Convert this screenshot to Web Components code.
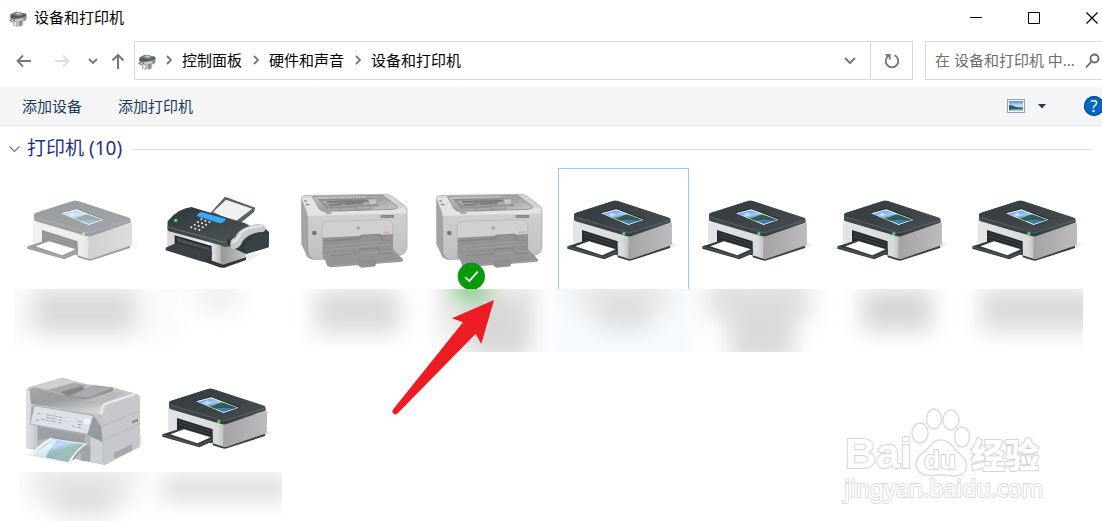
<!DOCTYPE html>
<html lang="zh-CN">
<head>
<meta charset="utf-8">
<title>设备和打印机</title>
<style>
html, body { margin: 0; min-height: 100%; background: #fff; }
body { font: 15px/20px "Noto Sans", "Noto Sans CJK SC", sans-serif; color: #000; overflow-x: hidden; }
</style>
</head>
<body>
<devices-window></devices-window>
<script>
function define(name, html, init) {
  customElements.define(name, class extends HTMLElement {
    constructor() {
      super();
      this.attachShadow({ mode: 'open' }).innerHTML = html;
    }
    connectedCallback() { if (init) init.call(this, this.shadowRoot); }
  });
}
const reset = `
  button { font: inherit; color: inherit; background: none; border: 0; padding: 0; margin: 0; }
  svg { display: block; }`;

define('mini-printer', `<style>:host{display:block;width:18px;height:18px}svg{display:block}</style>
<svg width="18" height="18" viewBox="0 0 54 54">
  <path d="M4 14 22 5 52 12 52 27 30 34 4 25Z" fill="#4d5457"/>
  <path d="M4 13 22 5 52 11 32 20Z" fill="#737b7e"/>
  <path d="M18 11 25 7 38 10 31 15Z" fill="#a9cbd3"/>
  <path d="M10 20 32 25 32 38 10 31Z" fill="#666"/>
  <path d="M34 24 52 17 51 31 35 38Z" fill="#8e9092"/>
  <path d="M2 31 12 26 21 29 10 35Z" fill="#ddd" stroke="#666" stroke-width="3"/>
  <path d="M19 27 40 24 43 44 25 50 15 42Z" fill="#c8c8c8"/>
  <path d="M28 32 42 29 41 47 28 50Z" fill="#8e8e8e" stroke="#ddd" stroke-width="2"/>
  <path d="M14 36 24 34 23 49 14 46Z" fill="#eee" stroke="#888" stroke-width="2"/>
</svg>`);

define('title-bar', `<style>${reset}
  :host { display: flex; height: 36px; align-items: center; overflow: hidden; }
  mini-printer { margin: 1px 7px 0 9px; }
  h1 { flex: 1; margin: 0 0 2px; font-size: 15px; font-weight: 400; line-height: 20px; }
  .keys { display: flex; flex: none; margin-right: -19px; }
  .keys button { width: 58px; height: 34px; display: grid; place-items: center; }
</style>
<mini-printer></mini-printer><h1><slot></slot></h1>
<div class="keys">
  <button aria-label="最小化"><svg width="14" height="14"><path d="M1 6.5H13" stroke="#000"/></svg></button>
  <button aria-label="最大化"><svg width="14" height="14"><path d="M1.500 1.500H12.500V12.500H1.500Z" fill="none" stroke="#000"/></svg></button>
  <button aria-label="关闭"><svg width="14" height="14"><path d="M1.500 1.500 12.500 12.500M12.500 1.500 1.500 12.500" stroke="#000" stroke-width="1.200"/></svg></button>
</div>`);

define('address-bar', `<style>${reset}
  :host { display: flex; height: 39px; padding: 5px 0 7px; overflow: hidden; }
  .go { display: flex; align-items: center; width: 134px; flex: none; }
  .go button { display: grid; place-items: center; height: 39px; }
  .go button:nth-child(1) { width: 47px; } .go button:nth-child(2) { width: 30px; }
  .go button:nth-child(3) { width: 31px; } .go button:nth-child(4) { width: 20px; }
  nav { flex: 1; display: flex; align-items: center; border: 1px solid #d9d9d9; min-width: 0; }
  mini-printer { margin: 2px 6px 0 3px; flex: none; }
  ol { display: flex; flex: 1; list-style: none; margin: 0 0 2px; padding: 0; white-space: nowrap; }
  li { display: flex; align-items: center; }
  li svg { margin: 0 8px 0 9px; }
  li:first-child svg { margin-left: 2px; }
  a { color: #000; text-decoration: none; }
  .drop { width: 40px; height: 37px; display: grid; place-items: center; }
  .again { width: 42px; height: 37px; border-left: 1px solid #d9d9d9; display: grid; place-items: center; }
  label { display: flex; align-items: center; flex: none; width: 177px; margin: 0 -2px 0 12px; border: 1px solid #d9d9d9; }
  input { flex: 1; min-width: 0; border: 0; outline: 0; padding: 0 0 2px 9px; font: inherit; color: #6d6d6d; background: none; }
  input::placeholder { color: #6d6d6d; opacity: 1; }
  label svg { margin-right: 2px; }
</style>
<div class="go">
  <button aria-label="后退"><svg width="16" height="14" fill="none" stroke="#777" stroke-width="1.800"><path d="M15 7H1M7 1.500 1.500 7 7 12.500"/></svg></button>
  <button aria-label="前进"><svg width="16" height="14" fill="none" stroke="#dedede" stroke-width="1.800"><path d="M1 7H15M9 1.500 14.500 7 9 12.500"/></svg></button>
  <button aria-label="最近的位置"><svg width="10" height="8" fill="none" stroke="#777" stroke-width="1.800"><path d="M1 2 5 6 9 2"/></svg></button>
  <button aria-label="上移"><svg width="14" height="16" fill="none" stroke="#777" stroke-width="2"><path d="M7 16V2M1.500 7.500 7 2 12.500 7.500"/></svg></button>
</div>
<nav aria-label="地址">
  <mini-printer></mini-printer>
  <ol></ol>
  <button class="drop" aria-label="以前的位置"><svg width="14" height="10" fill="none" stroke="#777" stroke-width="2"><path d="M2 2 7 7 12 2"/></svg></button>
  <button class="again" aria-label="刷新"><svg width="16" height="16" fill="none" stroke="#777" stroke-width="1.800"><path d="M5.500 2.200A6.300 6.300 0 1 0 10.500 2.200"/><path d="M1.500 1.900H5.700V6.400"/></svg></button>
</nav>
<label><input type="text" placeholder="在 设备和打印机 中..." aria-label="搜索"><svg width="16" height="16" fill="none" stroke="#666" stroke-width="1.800"><circle cx="9.500" cy="5.500" r="4"/><path d="M6.500 8.500 1 14.500"/></svg></label>`,
function (root) {
  root.querySelector('ol').innerHTML = this.getAttribute('path').split('/').map(p =>
    `<li><svg width="10" height="10" fill="none" stroke="#777" stroke-width="1.800"><path d="M3 1 7 5 3 9"/></svg><a href="#">${p}</a></li>`).join('');
});

define('command-bar', `<style>${reset}
  :host { display: flex; align-items: center; height: 38px; background: #f4f5f7; border-bottom: 1px solid #e5e6e8; color: #1e395b; overflow: hidden; padding-left: 22px; }
  .left { display: flex; flex: 1; gap: 36px; }
  .view { margin-right: 13px; } .more { margin-right: 38px; }
  .help { flex: none; width: 20px; height: 20px; border-radius: 50%; background: #0067c4; box-shadow: inset 0 0 0 1px #004a8c; color: #fff; font-size: 16px; line-height: 20px; margin-right: -2px; }
</style>
<div class="left"><slot></slot></div>
<button class="view" aria-label="更改视图"><svg width="18" height="14">
  <defs><linearGradient id="s" x2="0" y2="1"><stop stop-color="#4a8de0"/><stop offset=".5" stop-color="#d5e8f6"/><stop offset=".7" stop-color="#5c8fa0"/><stop offset="1" stop-color="#b8d6e8"/></linearGradient></defs>
  <rect x=".5" y=".5" width="17" height="13" fill="#fff" stroke="#999fa5"/><rect x="2" y="2" width="14" height="10" fill="url(#s)"/><path d="M2 6Q6 6 9 8 12 9 16 9V10Q8 10 2 11Z" fill="#2e6057"/></svg></button>
<button class="more" aria-label="更多选项"><svg width="8" height="5"><path d="M0 0H8L4 4.500Z" fill="#1e395b"/></svg></button>
<button class="help" aria-label="帮助">?</button>`);

define('command-button', `<style>${reset} :host { display: block; } button { line-height: 20px; display: block; }</style><button><slot></slot></button>`);

define('device-group', `<style>${reset}
  :host { display: block; }
  header { display: flex; align-items: center; height: 38px; padding: 4px 9px 0; }
  h2 { margin: 0; font-weight: 400; font-size: 19px; line-height: 24px; color: #1e3287; }
  h2 button { display: flex; align-items: center; gap: 7px; }
  h2 span { margin-bottom: 2px; }
  hr { flex: 1; border: 0; height: 1px; background: #e2e2e2; margin: 1px 0 0 9px; }
  .items { display: flex; flex-wrap: wrap; gap: 4px; padding-left: 18px; }
</style>
<header><h2><button aria-expanded="true"><svg width="11" height="8" fill="none" stroke="#777" stroke-width="1.200"><path d="M.500 1.500 5.500 6.500 10.500 1.500"/></svg><span></span></button></h2><hr></header>
<div class="items"><slot></slot></div>`, function (root) {
  root.querySelector('span').textContent = this.getAttribute('heading');
});

const photo = (id, pts) => `
  <clipPath id="${id}c"><path d="${pts}"/></clipPath>
  <linearGradient id="${id}g" x1=".1" y1="0" x2=".6" y2="1"><stop stop-color="#3f86f5"/><stop offset=".4" stop-color="#a5cbf6"/><stop offset=".55" stop-color="#5f9f9c"/><stop offset="1" stop-color="#2f6fb4"/></linearGradient>`;

const art = {
  inkjet: ['24 24 393 363', `
    <defs>
      <linearGradient id="top" x2="1" y2=".6"><stop stop-color="#353c40"/><stop offset=".5" stop-color="#3b4246"/><stop offset="1" stop-color="#454c50"/></linearGradient>
      <linearGradient id="front"><stop stop-color="#e3e4e6"/><stop offset=".85" stop-color="#d9dadc"/><stop offset="1" stop-color="#b4b5b7"/></linearGradient>
      <linearGradient id="side"><stop stop-color="#a3a3a5"/><stop offset="1" stop-color="#bcbcbe"/></linearGradient>
      <linearGradient id="rim"><stop stop-color="#42494d"/><stop offset=".6" stop-color="#363d41"/><stop offset="1" stop-color="#4c5357"/></linearGradient>
      <linearGradient id="shade"><stop stop-color="#bbb"/><stop offset="1" stop-color="#fff"/></linearGradient>
      ${photo('ph', 'M158 161 199 151 276 179 236 192Z')}
    </defs>
    <path d="M358 245 390 252 376 260 350 266Z" fill="url(#shade)" opacity=".5"/>
    <path d="M69 178 245 226 245 292 237 296 69 248Z" fill="url(#front)"/>
    <path d="M236 228 366 188V252L359 260 245 299 234 295Z" fill="url(#side)"/>
    <path d="M96 210 203 244V286L96 258Z" fill="#242a2e"/>
    <path d="M102 220 200 251M102 229 200 260" stroke="#41484c" stroke-width="3"/>
    <path d="M52 259 112 240 204 267 204 280 163 298 52 266Z" fill="#353c40"/>
    <path d="M76 259 117 244 197 268 157 286Z" fill="#fff"/>
    <path d="M54 261 160 292 203 275" fill="none" stroke="#666d70" stroke-width="2"/>
    <path d="M203 286 236 296Q240 298 246 296L360 257V264L246 301Q240 303 232 301L203 292Z" fill="#394044"/>
    <path d="M72 163Q72 160 78 158L188 123Q196 120 204 123L358 173Q362 175 362 180V188L247 227Q238 231 229 228L77 184Q72 182 72 178Z" fill="url(#rim)"/>
    <path d="M76 160 189 124Q196 122 203 124L357 175Q361 178 357 180L245 216Q237 219 229 216L77 170Q72 165 76 160Z" fill="url(#top)"/>
    <path d="M77 171 229 217Q237 220 245 217L357 181" fill="none" stroke="#687074" stroke-width="2"/>
    <path d="M149 158 197 145 287 177 240 196Z" fill="#23292d"/>
    <path d="M153 160 199 148 281 179 236 195Z" fill="#fff"/>
    <g clip-path="url(#phc)"><rect x="155" y="148" width="125" height="46" fill="url(#phg)"/>
      <path d="M182 178Q207 174 224 165L238 162 285 180 265 182Q230 176 207 184Z" fill="#2a5446" opacity=".85"/>
      <path d="M176 164 187 157 196 164 187 168Z" fill="#fff" opacity=".5"/></g>
    <rect x="217" y="217" width="9" height="8" rx="2" fill="#46e64a"/>`],
  fax: ['459 -36 393 363', `
    <defs><linearGradient id="f1" x2=".6" y2="1"><stop stop-color="#30383b"/><stop offset="1" stop-color="#4a5256"/></linearGradient>
    <linearGradient id="f2"><stop stop-color="#d5d5d6"/><stop offset=".75" stop-color="#eee"/><stop offset="1" stop-color="#aaa"/></linearGradient>
    <linearGradient id="f3"><stop stop-color="#969698"/><stop offset="1" stop-color="#c5c5c7"/></linearGradient></defs>
    <path d="M735 220 790 218 740 246Z" fill="#eee"/>
    <path d="M502 150 672 195 672 258 502 209Z" fill="url(#f2)"/>
    <path d="M662 190 737 169V238L676 260 662 255Z" fill="url(#f3)"/>
    <path d="M524 166 635 198V242L524 215Z" fill="#202729"/>
    <path d="M529 172 631 203V214L531 185Z" fill="#485053"/>
    <path d="M497 203 530 188 637 217 633 229 608 245 497 211Z" fill="#394144"/>
    <path d="M603 242 633 228 633 241 669 254 738 232V240L673 263Q667 265 650 259Z" fill="#303739"/>
    <path d="M629 101 675 50 766 83 762 96 708 140Z" fill="#596265"/>
    <path d="M639 96 678 59 757 86 704 126Z" fill="#f0f1f1"/>
    <path d="M503 129Q500 125 507 119 535 86 574 81L736 130 761 144 727 181 684 200Q674 204 662 196L507 154Q501 151 502 145Z" fill="url(#f1)"/>
    <path d="M503 141 664 185Q674 188 684 184" fill="none" stroke="#6b7275" stroke-width="3"/>
    <path d="M604 96 678 117Q672 129 659 130L590 108Q594 98 604 96Z" fill="#39aaff"/>
    <path d="M604 118h.1m12 4h.1m12 4h.1M594 126h.1m12 4h.1m12 4h.1M584 134h.1m12 4h.1m12 4h.1M574 142h.1m12 4h.1m12 4h.1" fill="none" stroke="#eee" stroke-width="6" stroke-linecap="round"/>
    <circle cx="527" cy="121" r="5" fill="#50ef35"/>
    <path d="M678 181 737 155 794 144 807 156 806 202 738 222 699 204Z" fill="#303b3e"/>
    <path d="M732 201Q743 175 782 156L807 161 806 201 739 221Z" fill="#374246"/>
    <path d="M691 190Q690 178 706 171 716 143 770 132 783 130 791 136 803 143 792 155 747 157 727 185 720 204 700 208Q689 204 691 190Z" fill="#c6c8c9"/>
    <path d="M697 187Q712 184 723 159 738 140 786 139" fill="none" stroke="#e6e7e8" stroke-width="6"/>
    <path d="M690 184Q680 193 691 199" stroke="#1f282b" stroke-width="3" fill="none"/>`],
  laser: ['-6 9 393 363', `
    <defs><linearGradient id="l1" x2="0" y2="1"><stop stop-color="#d6d6d6"/><stop offset="1" stop-color="#bfbfbf"/></linearGradient>
    <linearGradient id="l2" x2="1" y2="1"><stop stop-color="#c6c6c6"/><stop offset=".5" stop-color="#a0a0a0"/><stop offset="1" stop-color="#ccc"/></linearGradient></defs>
    <path d="M34 97Q38 91 60 91L282 88Q295 87 305 93L345 123Q351 128 351 137V249Q346 268 329 271L71 284Q60 282 55 270L35 238Z" fill="url(#l1)" stroke="#a0a0a0" stroke-width="2"/>
    <path d="M35 100 51 144 54 264 68 284 52 277 36 241Z" fill="#a4a4a4"/>
    <path d="M34 97 66 98 96 136 322 132 345 126 350 145 56 152Z" fill="#e4e4e4"/>
    <path d="M68 95 278 91 322 124Q324 131 310 133L101 139Q93 138 88 132Z" fill="url(#l2)" stroke="#969696" stroke-width="3"/>
    <path d="M83 102 247 99 268 123 109 130Z" fill="#8f8f8f"/>
    <path d="M86 98 225 96" stroke="#ddd" stroke-width="3" stroke-dasharray="4 4"/>
    <path d="M93 108 146 106 149 120 217 119 225 103 246 103 262 118 118 126Z" fill="#a8a8a8"/>
    <path d="M111 111 235 107M116 121 154 118M166 117 221 111" stroke="#7d7d7d" stroke-width="6"/>
    <path d="M235 103 258 102 260 116 241 119Z" fill="#c6c6c6" stroke="#999"/>
    <path d="M145 130 198 126 199 135 149 138ZM199 124 237 122 244 131 202 134Z" fill="#aaa" stroke="#888" stroke-width="2"/>
    <path d="M42 106 50 106 51 110 44 110ZM47 116 57 116 59 121 48 121Z" fill="#8b8b8b"/>
    <path d="M104 141 124 140 126 146 108 148Z" fill="#aaa"/>
    <rect x="272" y="150" width="40" height="9" fill="#858585"/><path d="M275 155H308" stroke="#c5c5c5"/>
    <path d="M53 153V267Q57 280 68 283" fill="none" stroke="#8f8f8f" stroke-width="2"/>
    <path d="M97 280V185Q98 170 115 169L284 164Q304 163 308 178V270" fill="#d0d0d0" stroke="#b4b4b4" stroke-width="2"/>
    <path d="M98 218 309 207V267L111 292 98 277Z" fill="#929292"/>
    <path d="M103 228 207 221 215 211 270 208 278 228 302 227" fill="none" stroke="#838383" stroke-width="4"/>
    <path d="M103 244 302 228M105 254 302 238" stroke="#a6a6a6" stroke-width="2"/>
    <path d="M98 264 308 252 340 284 336 290 123 307 112 303Z" fill="#949494"/>
    <path d="M103 271 308 259 332 286 251 294 243 286 206 290 199 297 123 302Z" fill="none" stroke="#a6a6a6" stroke-width="2"/>
    <path d="M120 272 207 266 211 252 263 249 271 264 308 264" fill="none" stroke="#838383" stroke-width="3"/>
    <path d="M209 289 248 286 258 290 255 303 216 307 207 303Z" fill="#909090" stroke="#838383" stroke-width="2"/>
    <circle cx="73" cy="204" r="7" fill="#777"/><circle cx="205" cy="189" r="5" fill="#9b9b9b"/><path d="M203 193 207 185" stroke="#eee"/>
    <path d="M281 202H290M293 202H300" stroke="#d79aa2" stroke-width="5" stroke-dasharray="4 1"/>`],
  office: ['54 -27 393 363', `
    <defs><linearGradient id="o1" x2=".6" y2="1"><stop stop-color="#a5a7a9"/><stop offset=".5" stop-color="#999b9d"/><stop offset="1" stop-color="#d1d2d4"/></linearGradient>
    <linearGradient id="o2"><stop stop-color="#e1e2e4"/><stop offset="1" stop-color="#c5c7ca"/></linearGradient>
    ${photo('op', 'M98 270Q121 245 157 223L252 238Q224 258 205 291Z')}</defs>
    <path d="M414 207 430 213 418 249Z" fill="#eee"/>
    <path d="M79 80Q79 72 87 67L180 40Q190 37 209 44L258 57 338 67 403 85Q420 90 420 100V245L314 300 249 287 79 249Z" fill="#c2c4c8"/>
    <path d="M306 149Q305 121 320 116L406 87Q418 88 420 98V244L314 300Z" fill="#c6c8cb"/>
    <path d="M307 183 420 137M308 226 419 176" stroke="#afb2b6" stroke-width="2"/>
    <path d="M79 80 91 75 94 115 111 188 111 250 79 249Z" fill="url(#o2)"/>
    <path d="M89 74Q95 67 107 68L207 94 246 85 320 116 309 149 303 149 93 116Z" fill="url(#o1)"/>
    <path d="M105 64 184 41 252 58 253 68 181 81Z" fill="#cfd0d2"/>
    <path d="M140 75 221 53 262 61 207 92Z" fill="#a6a8aa"/>
    <path d="M181 82 244 63 260 74 206 95Z" fill="#858789"/>
    <path d="M207 94 279 61 339 68 340 77 267 104Z" fill="#919497"/>
    <path d="M209 92 278 62 336 70 264 98Z" fill="#a8aaad"/>
    <path d="M253 106 337 80 373 84 317 113Z" fill="#b8babc"/>
    <path d="M304 148Q302 119 321 115L405 87" fill="none" stroke="#e9eaec" stroke-width="7"/>
    <path d="M94 124 281 152 302 179 309 234 267 213 90 177Z" fill="#aaaeb3"/>
    <path d="M281 153 303 188 308 232 262 208Z" fill="#96999d"/>
    <path d="M103 122 280 152 263 208 90 177Z" fill="#dce1e9" stroke="#9ca3ad" stroke-width="2"/>
    <g stroke="#9aa2ad" stroke-width="3"><path d="M113 145 124 147M108 165 119 167M124 162 133 164M139 149 154 152M138 157 153 160M136 165 151 168M158 152 172 155M156 160 170 163M154 168 168 171M178 156 190 159M176 164 188 167M174 172 186 175M236 169 248 171M234 178 246 180M232 187 244 189M216 183 226 185" stroke-dasharray="8 2"/></g>
    <path d="M196 158 229 164 227 171 194 165Z" fill="#eee" stroke="#a5acb6"/>
    <circle cx="261" cy="169" r="10" fill="#f0f3f7"/>
    <path d="M113 184 272 214 272 290 249 286 111 250Z" fill="#b4b7bc"/>
    <path d="M113 183 255 211V235L157 218 113 226Z" fill="#9ca0a5"/>
    <path d="M161 217 253 234 221 285 184 281Z" fill="#85888c"/>
    <path d="M253 238 272 242 271 289 242 287 246 266 233 262Z" fill="#a0a4a9"/>
    <path d="M272 216 307 232V298L272 290Z" fill="#cdd0d6"/>
    <path d="M342 263 397 237V257L342 281Z" fill="#a8abae"/><path d="M345 266 395 242M345 272 395 248M345 278 395 254" stroke="#989ca1"/>
    <path d="M396 169 414 161V168L396 176Z" fill="#85898d"/>
    <path d="M87 270Q115 240 150 219L262 236Q231 254 211 295Z" fill="#f5f6f7" stroke="#c6c8ca"/>
    <g clip-path="url(#opc)" opacity=".6"><rect x="95" y="218" width="160" height="76" fill="url(#opg)"/>
    <path d="M95 269Q136 247 153 225L172 226Q143 257 138 277Z" fill="#fff" opacity=".65"/>
    <path d="M153 275Q184 270 202 248L260 239 205 291Z" fill="#6f9e8b" opacity=".75"/></g>`]
};

define('device-item', `<style>
  :host { display: block; width: 131px; }
  .icon { display: block; width: 131px; height: 121px; box-sizing: border-box; }
  :host([selected]) .icon { border: 1px solid #91cdfa; border-bottom: 0; }
  :host([selected]) .icon svg { margin: -1px; }
  :host([off]) .icon svg { opacity: .5; }
  svg { display: block; }
  .name { height: 63px; clip-path: inset(0 var(--end, -40px) 0 var(--start, -40px)); }
  .name svg { overflow: visible; }
  :host([short]) .name { height: 49px; margin-top: -5px; }
</style>
<div class="icon"></div><div class="name"></div>`, function (root) {
  const [box, body] = art[this.getAttribute('kind')];
  const check = this.hasAttribute('default') ? `<circle cx="139" cy="334" r="40" fill="#079b0b" stroke="#087a0a" stroke-width="2"/><path d="M120 336 133 348 158 320" fill="none" stroke="#fff" stroke-width="5"/>` : '';
  root.querySelector('.icon').innerHTML = `<svg width="131" height="121" viewBox="${box}" aria-hidden="true">${body}${check}</svg>`;
  const spots = (this.getAttribute('haze') || '').split(';').map(s => {
    const [x, y, w, h, c] = s.trim().split(' ');
    return `<rect x="${x}" y="${y}" width="${w}" height="${h}" fill="${c}"/>`;
  }).join('');
  root.querySelector('.name').innerHTML = `<svg width="131" height="63" aria-hidden="true"><defs><filter id="b" filterUnits="userSpaceOnUse" color-interpolation-filters="sRGB" x="-60" y="-60" width="260" height="190"><feGaussianBlur stdDeviation="11"/></filter></defs><g filter="url(#b)">${spots}</g></svg>`;
});

define('pointer-arrow', `<style>:host { position: absolute; left: 390px; top: 298px; pointer-events: none; } svg { display: block; }</style>
<svg width="106" height="118" viewBox="390 298 106 118" aria-hidden="true"><path d="M494 300 452 318.300 463 322.300 393 409.500Q391.500 412 393.500 413.800 395.500 415.300 398 413L475.700 333.700 481.300 344Z" fill="#ed1c24"/></svg>`);

define('site-mark', `<style>:host { position: absolute; right: 56px; top: 400px; pointer-events: none; } svg { display: block; }
  text { fill: #fff; stroke: #d4d4d4; stroke-width: 2px; paint-order: stroke; }
  .b { font: 700 43px "Liberation Sans", sans-serif; } .c { font: 900 34px "Noto Sans CJK SC", sans-serif; }
  .d { font: 700 26px "Liberation Sans", sans-serif; } .u { font: 23px "Noto Sans", sans-serif; stroke: #dcdcdc; }
</style>
<svg width="206" height="106">
  <g fill="#fff" stroke="#dcdcdc" stroke-width="1.500"><ellipse cx="80" cy="33" rx="8" ry="10"/><ellipse cx="94" cy="19" rx="7.500" ry="10"/><ellipse cx="111" cy="20" rx="8" ry="10"/><ellipse cx="122" cy="37" rx="7.500" ry="10"/>
  <path d="M101 40C110 40 113 48 121 55 131 64 127 76 114 76 107 76 103 74 97 75 86 77 76 74 76 64 76 55 86 52 91 45Q95 40 101 40Z"/></g>
  <text class="b" x="5" y="68">Bai</text><text class="d" x="84" y="69">du</text><text class="c" x="131" y="68">经验</text>
  <text class="u" x="4" y="97">jingyan.baidu.com</text>
</svg>`);

define('devices-window', `<style>
  :host { display: block; position: relative; overflow: hidden; min-height: 100vh; background: #fff; }
</style>
<title-bar>设备和打印机</title-bar>
<address-bar path="控制面板/硬件和声音/设备和打印机"></address-bar>
<command-bar><command-button>添加设备</command-button><command-button>添加打印机</command-button></command-bar>
<device-group heading="打印机 (10)">
  <device-item kind="inkjet" off style="--start:-4px" haze="-20 -10 180 60 #fafafa;16 0 101 44 #dadada"></device-item>
  <device-item kind="fax" haze="42 -6 46 28 #efefef"></device-item>
  <device-item kind="laser" haze="27 0 85 44 #dadada"></device-item>
  <device-item kind="laser" default haze="14 -10 100 60 #e9e9e9;44 10 64 60 #d8d8d8;32 -12 32 20 #62c46a"></device-item>
  <device-item kind="inkjet" selected haze="-10 -20 150 100 #f7fafd;16 -8 98 30 #e8e9ea;40 4 52 36 #dcdee0"></device-item>
  <device-item kind="inkjet" haze="14 -10 104 40 #e0e0e0;36 14 66 60 #dadada"></device-item>
  <device-item kind="inkjet" haze="34 0 70 42 #d6d6d6"></device-item>
  <device-item kind="inkjet" style="--end:11px" haze="18 0 120 42 #dadada"></device-item>
  <device-item kind="office" short style="--start:1px" haze="10 -10 110 40 #ececec;35 10 62 34 #dedede"></device-item>
  <device-item kind="inkjet" short style="--end:2px" haze="8 4 130 24 #dcdcdc"></device-item>
</device-group>
<pointer-arrow></pointer-arrow>
<site-mark></site-mark>`);
</script>
</body>
</html>
